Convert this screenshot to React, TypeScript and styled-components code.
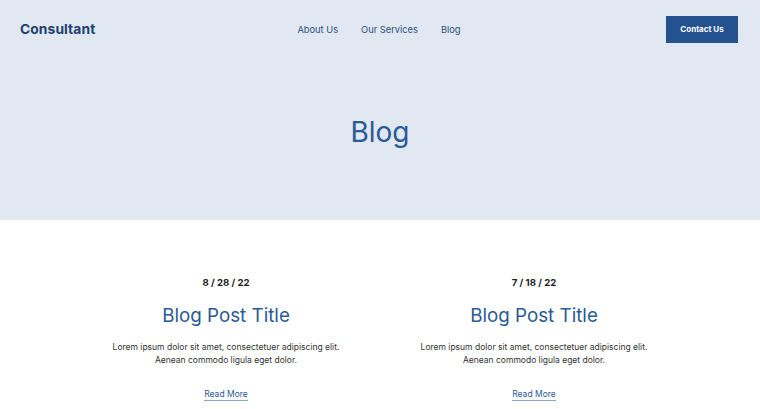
import React from "react";
import styled, { createGlobalStyle } from "styled-components";

const Global = createGlobalStyle`
  html, body { margin: 0; padding: 0; background: #ffffff; }
  body { font-family: "Inter", "Open Sans", sans-serif; -webkit-font-smoothing: antialiased; }
  * { box-sizing: border-box; }
`;

const Hero = styled.section`
  background: #e1e8f1;
  height: 220px;
  display: flex;
  flex-direction: column;
`;

const Header = styled.header`
  height: 58px;
  display: grid;
  grid-template-columns: 1fr auto 1fr;
  align-items: center;
  padding: 0 22px 0 20px;
`;

const Logo = styled.div`
  font-size: 13.8px;
  font-weight: 700;
  color: #1f4170;
  letter-spacing: 0.1px;
`;

const Nav = styled.nav`
  display: flex;
  gap: 23px;
  font-size: 9.3px;
  color: #2d4f7c;
`;

const NavLink = styled.a`
  color: inherit;
  text-decoration: none;
`;

const Actions = styled.div`
  display: flex;
  justify-content: flex-end;
`;

const Button = styled.a`
  background: #24528f;
  color: #ffffff;
  font-size: 8px;
  font-weight: 700;
  width: 72px;
  height: 27px;
  display: flex;
  align-items: center;
  justify-content: center;
  text-decoration: none;
`;

const HeroTitle = styled.h1`
  margin: 0;
  padding-top: 57px;
  text-align: center;
  font-size: 28px;
  font-weight: 400;
  color: #2a5a94;
`;

const Posts = styled.section`
  width: 616px;
  margin: 0 auto;
  padding-top: 55px;
  display: grid;
  grid-template-columns: 1fr 1fr;
`;

const Post = styled.article`
  display: flex;
  flex-direction: column;
  align-items: center;
  text-align: center;
`;

const PostDate = styled.div`
  font-size: 9.6px;
  font-weight: 700;
  color: #222222;
  line-height: 16px;
`;

const PostTitle = styled.h2`
  margin: 11px 0 0;
  font-size: 18.8px;
  font-weight: 400;
  color: #2a5a94;
  line-height: 28px;
`;

const PostText = styled.p`
  margin: 11px 0 0;
  font-size: 8.5px;
  line-height: 13px;
  color: #333333;
`;

const ReadMore = styled.a`
  margin-top: 21px;
  font-size: 8.5px;
  color: #2a5a94;
  text-decoration: none;
  border-bottom: 1px solid #8aa5c8;
  line-height: 12px;
`;

const posts = [
  { date: "8 / 28 / 22" },
  { date: "7 / 18 / 22" },
];

export default function App() {
  return (
    <>
      <Global />
      <Hero>
        <Header>
          <Logo>Consultant</Logo>
          <Nav>
            <NavLink href="#">About Us</NavLink>
            <NavLink href="#">Our Services</NavLink>
            <NavLink href="#">Blog</NavLink>
          </Nav>
          <Actions>
            <Button href="#">Contact Us</Button>
          </Actions>
        </Header>
        <HeroTitle>Blog</HeroTitle>
      </Hero>
      <Posts>
        {posts.map((p) => (
          <Post key={p.date}>
            <PostDate>{p.date}</PostDate>
            <PostTitle>Blog Post Title</PostTitle>
            <PostText>
              Lorem ipsum dolor sit amet, consectetuer adipiscing elit.
              <br />
              Aenean commodo ligula eget dolor.
            </PostText>
            <ReadMore href="#">Read More</ReadMore>
          </Post>
        ))}
      </Posts>
    </>
  );
}
